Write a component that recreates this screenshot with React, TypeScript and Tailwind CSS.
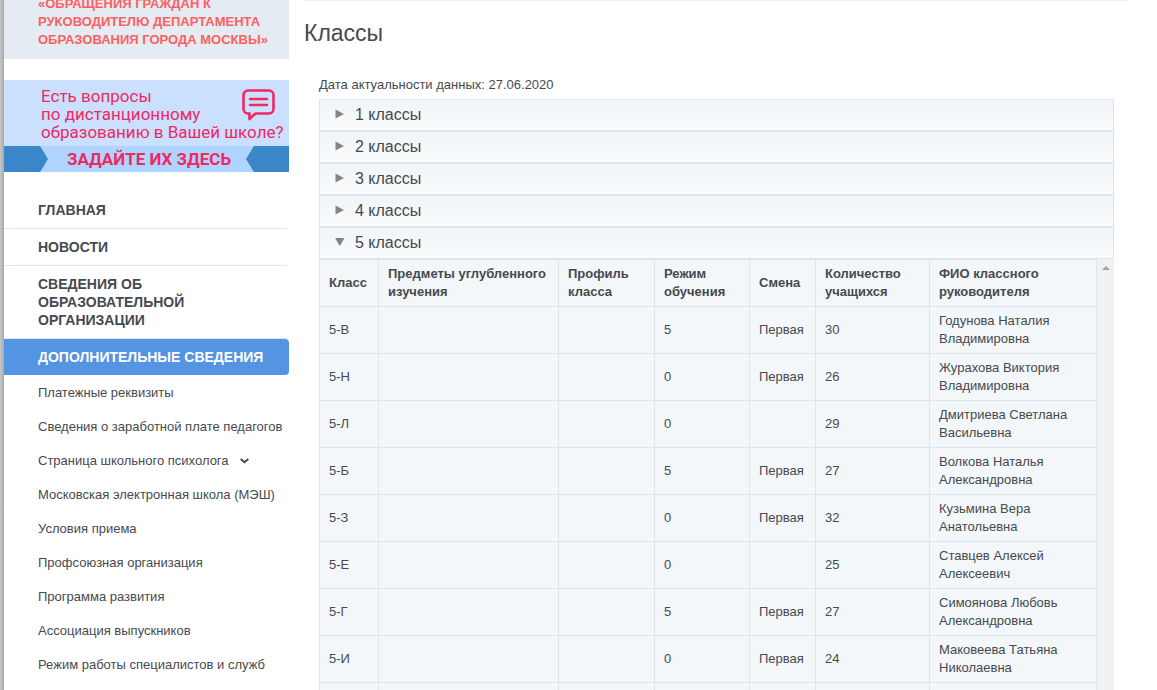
import { useState } from 'react';

interface ClassRow {
  name: string;
  mode: string;
  shift: string;
  count: number;
  teacher: string;
}

const navItems = ['Главная', 'Новости', 'Сведения об образовательной организации'];

const subItems = [
  { label: 'Платежные реквизиты' },
  { label: 'Сведения о заработной плате педагогов' },
  { label: 'Страница школьного психолога', expandable: true },
  { label: 'Московская электронная школа (МЭШ)' },
  { label: 'Условия приема' },
  { label: 'Профсоюзная организация' },
  { label: 'Программа развития' },
  { label: 'Ассоциация выпускников' },
  { label: 'Режим работы специалистов и служб' },
];

const grades = [1, 2, 3, 4, 5];

const rows: ClassRow[] = [
  { name: '5-В', mode: '5', shift: 'Первая', count: 30, teacher: 'Годунова Наталия Владимировна' },
  { name: '5-Н', mode: '0', shift: 'Первая', count: 26, teacher: 'Журахова Виктория Владимировна' },
  { name: '5-Л', mode: '0', shift: '', count: 29, teacher: 'Дмитриева Светлана Васильевна' },
  { name: '5-Б', mode: '5', shift: 'Первая', count: 27, teacher: 'Волкова Наталья Александровна' },
  { name: '5-З', mode: '0', shift: 'Первая', count: 32, teacher: 'Кузьмина Вера Анатольевна' },
  { name: '5-Е', mode: '0', shift: '', count: 25, teacher: 'Ставцев Алексей Алексеевич' },
  { name: '5-Г', mode: '5', shift: 'Первая', count: 27, teacher: 'Симоянова Любовь Александровна' },
  { name: '5-И', mode: '0', shift: 'Первая', count: 24, teacher: 'Маковеева Татьяна Николаевна' },
];

function Banner() {
  return (
    <a href="#questions" className="block mt-[21px] text-[#ee2a5f] font-[Roboto,sans-serif]">
      <div className="flex justify-between h-[66px] bg-[#cbdfff] pl-[37px] pr-[13px] pt-[7px]">
        <p className="text-[17px] leading-[18px] whitespace-nowrap w-0">
          Есть вопросы
          <br />
          по дистанционному
          <br />
          образованию в Вашей школе?
        </p>
        <svg width="36" height="34" viewBox="0 0 36 34" fill="none" stroke="#ee2a5f" strokeWidth="2.6" strokeLinejoin="round" strokeLinecap="round">
          <path d="M8 3.500h21a4.500 4.500 0 0 1 4.500 4.500v14a4.500 4.500 0 0 1-4.500 4.500H15.500l-6 5.500v-5.500H8A4.500 4.500 0 0 1 3.500 22V8A4.500 4.500 0 0 1 8 3.500z" />
          <path d="M10 12h17M10 18h17" strokeWidth="2.400" />
        </svg>
      </div>
      <div className="flex items-center justify-between h-[26px] bg-[#aed4ff]">
        <svg width="44" height="26" viewBox="0 0 44 26">
          <path d="M0 0h36l8 13-8 13H0z" fill="#3b86c8" />
        </svg>
        <span className="pl-1 text-[17px] leading-[26px] font-bold whitespace-nowrap">ЗАДАЙТЕ ИХ ЗДЕСЬ</span>
        <svg width="43" height="26" viewBox="0 0 43 26">
          <path d="M43 0H8L0 13l8 13h35z" fill="#3b86c8" />
        </svg>
      </div>
    </a>
  );
}

function Sidebar() {
  return (
    <aside className="w-[285px] shrink-0">
      <div className="flex flex-col justify-end h-[59px] overflow-hidden bg-[#e4ebf2] pl-[34px] pb-[10px]">
        <a href="#appeals" className="text-[13px] leading-[18px] font-bold uppercase text-[#ff5f5f]">
          «Обращения граждан к
          <br />
          руководителю департамента
          <br />
          образования города Москвы»
        </a>
      </div>

      <Banner />

      <nav className="mt-5">
        {navItems.map((item) => (
          <a
            key={item}
            href="#nav"
            className="block pl-[34px] pr-[60px] py-[9px] text-[14px] leading-[18px] font-bold uppercase border-b border-[#dfe6ec] rounded-br"
          >
            {item}
          </a>
        ))}
        <a
          href="#extra"
          className="block pl-[34px] py-[9px] text-[14px] leading-[18px] font-bold uppercase whitespace-nowrap text-white bg-[#5593e3] rounded-r"
        >
          Дополнительные сведения
        </a>
        <ul className="pt-px">
          {subItems.map((item) => (
            <li key={item.label}>
              <a href="#sub" className="flex items-center pl-[34px] py-2 text-[13px] leading-[18px] whitespace-nowrap">
                {item.label}
                {item.expandable && (
                  <svg width="9" height="6" viewBox="0 0 9 6" className="ml-[11px]" fill="none" stroke="currentColor" strokeWidth="2">
                    <path d="M.7 1l3.800 3.200L8.300 1" />
                  </svg>
                )}
              </a>
            </li>
          ))}
        </ul>
      </nav>
    </aside>
  );
}

function ClassTable() {
  return (
    <div className="flex">
      <table className="flex-1 table-fixed border-collapse bg-[#f3f7fa] text-[13px] leading-[18px] text-left [&_th]:border [&_th]:border-[#dee6ec] [&_th]:px-[9px] [&_th]:py-[5px] [&_td]:border [&_td]:border-[#dee6ec] [&_td]:px-[9px] [&_td]:py-[5px]">
        <colgroup>
          <col className="w-[59px]" />
          <col className="w-[180px]" />
          <col className="w-[96px]" />
          <col className="w-[95px]" />
          <col className="w-[66px]" />
          <col className="w-[114px]" />
          <col />
        </colgroup>
        <thead>
          <tr>
            <th>Класс</th>
            <th>Предметы углубленного изучения</th>
            <th>Профиль класса</th>
            <th>Режим обучения</th>
            <th>Смена</th>
            <th>Количество учащихся</th>
            <th>ФИО классного руководителя</th>
          </tr>
        </thead>
        <tbody>
          {rows.map((row) => {
            const [surname, firstName, patronymic] = row.teacher.split(' ');
            return (
              <tr key={row.name}>
                <td>{row.name}</td>
                <td></td>
                <td></td>
                <td>{row.mode}</td>
                <td>{row.shift}</td>
                <td>{row.count}</td>
                <td>
                  {surname} {firstName}
                  <br />
                  {patronymic}
                </td>
              </tr>
            );
          })}
          <tr className="h-[47px]">
            <td></td>
            <td></td>
            <td></td>
            <td></td>
            <td></td>
            <td></td>
            <td></td>
          </tr>
        </tbody>
      </table>
      {/* Scroll track */}
      <div className="w-[17px] bg-[#f1f1f1] flex justify-center pt-[7px]">
        <svg width="8" height="4" viewBox="0 0 8 4">
          <path d="M0 4l4-4 4 4z" fill="#a3a3a3" />
        </svg>
      </div>
    </div>
  );
}

export default function App() {
  const [openGrade, setOpenGrade] = useState(5);

  return (
    <div className="flex h-screen overflow-hidden bg-white text-[#464a4e] font-['Liberation_Sans',Arial,sans-serif]">
      <div className="w-1 shrink-0 bg-linear-to-r from-[#c8c8c8] to-[#a8a8a8]" />
      <Sidebar />

      <main className="flex-1 min-w-0 pl-[15px] pr-[29px]">
        <div className="h-px bg-[#f0f0f0]" />
        <h1 className="mt-[18px] text-[23px] leading-[28px]">Классы</h1>

        <div className="mt-[29px] pl-[15px] pr-[14px]">
          <p className="text-[13px] leading-[18px]">Дата актуальности данных: 27.06.2020</p>
          <div className="mt-[5px]">
            {grades.map((grade) => {
              const open = grade === openGrade;
              return (
                <section key={grade}>
                  <button
                    type="button"
                    aria-expanded={open}
                    onClick={() => setOpenGrade(open ? 0 : grade)}
                    className="flex items-center w-full h-8 pl-[15px] text-[16px] leading-[30px] text-left border border-[#dee6ec] bg-linear-to-b from-[#f0f5f9] to-[#fafbfc]"
                  >
                    <svg width="10" height="12" viewBox="0 0 10 12" fill="#858585">
                      {open ? <path d="M0 1h9.500L4.750 9z" /> : <path d="M.5.500L9 5 .5 9.500z" />}
                    </svg>
                    <span className="ml-[10px]">{grade} классы</span>
                  </button>
                  {open && <ClassTable />}
                </section>
              );
            })}
          </div>
        </div>
      </main>
    </div>
  );
}
